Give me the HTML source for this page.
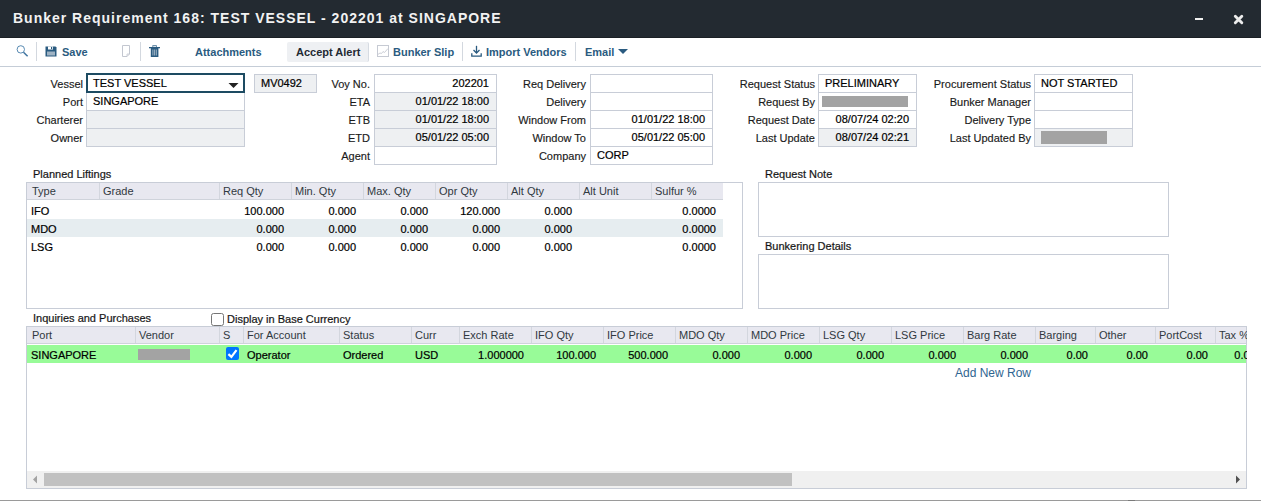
<!DOCTYPE html><html><head><meta charset="utf-8"><style>
*{box-sizing:border-box;margin:0;padding:0}
html,body{width:1261px;height:501px;overflow:hidden;background:#fff;font-family:"Liberation Sans",sans-serif;font-size:11px;color:#000}
div,span,svg{position:absolute}
.tt{left:13px;top:10px;font-size:14px;font-weight:bold;color:#f2f2f2;letter-spacing:1.0px;white-space:nowrap;line-height:16px}
.tbt{font-weight:bold;color:#2a5b80;white-space:nowrap;line-height:13px}
.sep{width:1px;background:#d3d8df}
.lbl{text-align:right;white-space:nowrap;color:#1a1a1a;line-height:13px;-webkit-text-stroke:0.15px #1a1a1a}
.bx{border:1px solid #c8cdd7;background:#fff}
.ro{background:#eef0f2}
.v{white-space:nowrap;color:#000;line-height:13px;-webkit-text-stroke:0.2px #000}
.hc{color:#303840;white-space:nowrap;line-height:13px}
.gb{background:#a3a3a3}
</style></head><body>
<div style="left:0;top:0;width:1261px;height:38px;background:#232a31"></div>
<div style="left:0;top:37px;width:1261px;height:1px;background:#1b2025"></div>
<div class="tt">Bunker Requirement 168: TEST VESSEL - 202201 at SINGAPORE</div>
<div style="left:1195px;top:18px;width:8px;height:2.4px;background:#f0f0f0"></div>
<svg style="left:1232px;top:14px" width="13" height="12" viewBox="0 0 13 12"><path d="M3.3 2.3L9.8 8.8M9.8 2.3L3.3 8.8" stroke="#ececec" stroke-width="2.9" stroke-linecap="round"/></svg>
<div style="left:0;top:66px;width:1261px;height:1px;background:#c5cdd7"></div>
<svg style="left:15px;top:44px" width="16" height="16" viewBox="0 0 16 16"><circle cx="5.8" cy="5.4" r="3.7" fill="none" stroke="#4f84ae" stroke-width="0.95"/><path d="M8.5 8.2L12.6 12.2" stroke="#3f74a0" stroke-width="1.5"/></svg>
<div class="sep" style="left:36px;top:42px;height:19px"></div>
<svg style="left:45px;top:45px" width="12" height="12" viewBox="0 0 12 12"><path d="M0.5 1.5h10l1 1v9h-11z" fill="#2a5b80"/><rect x="3" y="1.5" width="5" height="3" fill="#fff"/><rect x="6" y="2" width="1.2" height="2" fill="#2a5b80"/><rect x="2" y="6.5" width="8" height="4" fill="#9fb3c4"/></svg>
<div class="tbt" style="left:62px;top:46px">Save</div>
<svg style="left:121px;top:44px" width="10" height="14" viewBox="0 0 10 14"><path d="M1.5 1.5h7v8.5l-2.5 2.5h-4.5z" fill="none" stroke="#c3c7d0" stroke-width="1"/><path d="M6 12.5v-2.5h2.5" fill="none" stroke="#c3c7d0" stroke-width="0.8"/></svg>
<div class="sep" style="left:140px;top:42px;height:19px"></div>
<svg style="left:149px;top:44px" width="12" height="14" viewBox="0 0 12 14"><rect x="3.8" y="1.6" width="3.6" height="1.6" fill="none" stroke="#4d7898" stroke-width="0.8"/><rect x="0" y="3" width="11" height="1.3" fill="#2a5b80"/><rect x="1.8" y="4" width="7.6" height="9" fill="#2a5b80"/><rect x="3.4" y="5.5" width="1" height="6" fill="#9fb3c4"/><rect x="5.1" y="5.5" width="1" height="6" fill="#9fb3c4"/><rect x="6.8" y="5.5" width="1" height="6" fill="#9fb3c4"/></svg>
<div class="tbt" style="left:195px;top:46px">Attachments</div>
<div style="left:287px;top:42px;width:82px;height:20px;background:#eef0f3;border-right:1px solid #d6dbe2;border-radius:2px"></div>
<div class="tbt" style="left:296px;top:46px;color:#1f2a33">Accept Alert</div>
<svg style="left:377px;top:45px" width="12" height="12" viewBox="0 0 12 12"><rect x="0.5" y="0.5" width="11" height="11" fill="none" stroke="#c6cad3" stroke-width="1"/><path d="M0.8 9.5L3 8L4.5 8.5L6 6.5L7.5 7.5L11 3.5" fill="none" stroke="#c6cad3" stroke-width="0.9"/></svg>
<div class="tbt" style="left:393px;top:46px">Bunker Slip</div>
<div class="sep" style="left:462px;top:42px;height:19px"></div>
<svg style="left:471px;top:45px" width="12" height="12" viewBox="0 0 12 12"><path d="M5.5 0.8V8" stroke="#2a5b80" stroke-width="1.3"/><path d="M2.5 5L5.5 8L8.5 5" fill="none" stroke="#2a5b80" stroke-width="1.3"/><path d="M0.8 8.2V11.2H10.2V8.2" fill="none" stroke="#2a5b80" stroke-width="1.3"/></svg>
<div class="tbt" style="left:486px;top:46px">Import Vendors</div>
<div class="sep" style="left:575px;top:42px;height:19px"></div>
<div class="tbt" style="left:585px;top:46px">Email</div>
<svg style="left:618px;top:48px" width="10" height="7" viewBox="0 0 10 7"><path d="M0 1h10L5 6z" fill="#2a5b80"/></svg>
<div class="lbl" style="right:1178px;top:78px">Vessel</div>
<div class="lbl" style="right:1178px;top:96px">Port</div>
<div class="lbl" style="right:1178px;top:114px">Charterer</div>
<div class="lbl" style="right:1178px;top:132px">Owner</div>
<div class="bx" style="left:86px;top:92px;width:159px;height:19px"></div>
<div class="bx ro" style="left:86px;top:110px;width:159px;height:19px"></div>
<div class="bx ro" style="left:86px;top:128px;width:159px;height:19px"></div>
<div style="left:86px;top:73px;width:159px;height:20px;border:2px solid #1d4b62;background:#fff"></div>
<div class="v" style="left:93px;top:77px">TEST VESSEL</div>
<div class="v" style="left:93px;top:95px">SINGAPORE</div>
<svg style="left:228px;top:82px" width="12" height="7" viewBox="0 0 12 7"><path d="M0.5 1h10L5.5 6z" fill="#222"/></svg>
<div class="bx ro" style="left:254px;top:74px;width:63px;height:19px"></div>
<div class="v" style="left:261px;top:77px">MV0492</div>
<div class="lbl" style="right:891px;top:78px">Voy No.</div>
<div class="lbl" style="right:891px;top:96px">ETA</div>
<div class="lbl" style="right:891px;top:114px">ETB</div>
<div class="lbl" style="right:891px;top:132px">ETD</div>
<div class="lbl" style="right:891px;top:150px">Agent</div>
<div class="bx" style="left:374px;top:74px;width:123px;height:19px"></div>
<div class="bx ro" style="left:374px;top:92px;width:123px;height:19px"></div>
<div class="bx ro" style="left:374px;top:110px;width:123px;height:19px"></div>
<div class="bx ro" style="left:374px;top:128px;width:123px;height:19px"></div>
<div class="bx" style="left:374px;top:146px;width:123px;height:19px"></div>
<div class="v" style="right:772px;top:77px">202201</div>
<div class="v" style="right:772px;top:95px">01/01/22 18:00</div>
<div class="v" style="right:772px;top:113px">01/01/22 18:00</div>
<div class="v" style="right:772px;top:131px">05/01/22 05:00</div>
<div class="lbl" style="right:675px;top:78px">Req Delivery</div>
<div class="lbl" style="right:675px;top:96px">Delivery</div>
<div class="lbl" style="right:675px;top:114px">Window From</div>
<div class="lbl" style="right:675px;top:132px">Window To</div>
<div class="lbl" style="right:675px;top:150px">Company</div>
<div class="bx" style="left:590px;top:74px;width:123px;height:19px"></div>
<div class="bx" style="left:590px;top:92px;width:123px;height:19px"></div>
<div class="bx" style="left:590px;top:110px;width:123px;height:19px"></div>
<div class="bx" style="left:590px;top:128px;width:123px;height:19px"></div>
<div class="bx" style="left:590px;top:146px;width:123px;height:19px"></div>
<div class="v" style="right:556px;top:113px">01/01/22 18:00</div>
<div class="v" style="right:556px;top:131px">05/01/22 05:00</div>
<div class="v" style="left:597px;top:149px">CORP</div>
<div class="lbl" style="right:446px;top:78px">Request Status</div>
<div class="lbl" style="right:446px;top:96px">Request By</div>
<div class="lbl" style="right:446px;top:114px">Request Date</div>
<div class="lbl" style="right:446px;top:132px">Last Update</div>
<div class="bx" style="left:818px;top:74px;width:99px;height:19px"></div>
<div class="bx" style="left:818px;top:92px;width:99px;height:19px"></div>
<div class="bx" style="left:818px;top:110px;width:99px;height:19px"></div>
<div class="bx ro" style="left:818px;top:128px;width:99px;height:19px"></div>
<div class="v" style="left:825px;top:77px">PRELIMINARY</div>
<div class="v" style="right:352px;top:113px">08/07/24 02:20</div>
<div class="v" style="right:352px;top:131px">08/07/24 02:21</div>
<div class="gb" style="left:822px;top:96px;width:86px;height:11px"></div>
<div class="lbl" style="right:230px;top:78px">Procurement Status</div>
<div class="lbl" style="right:230px;top:96px">Bunker Manager</div>
<div class="lbl" style="right:230px;top:114px">Delivery Type</div>
<div class="lbl" style="right:230px;top:132px">Last Updated By</div>
<div class="bx" style="left:1034px;top:74px;width:99px;height:19px"></div>
<div class="bx" style="left:1034px;top:92px;width:99px;height:19px"></div>
<div class="bx" style="left:1034px;top:110px;width:99px;height:19px"></div>
<div class="bx ro" style="left:1034px;top:128px;width:99px;height:19px"></div>
<div class="v" style="left:1041px;top:77px">NOT STARTED</div>
<div class="gb" style="left:1041px;top:131px;width:66px;height:13px"></div>
<div class="v" style="left:33px;top:168px;color:#1e1e1e">Planned Liftings</div>
<div style="left:26px;top:182px;width:717px;height:127px;border:1px solid #c8cdd7;background:#fff"></div>
<div style="left:27px;top:183px;width:696px;height:17px;background:#e8e8f0;border-bottom:1px solid #cfd3db"></div>
<div style="left:99px;top:183px;width:1px;height:16px;background:#d3d6de"></div>
<div class="hc" style="left:32px;top:185px">Type</div>
<div style="left:219px;top:183px;width:1px;height:16px;background:#d3d6de"></div>
<div class="hc" style="left:103px;top:185px">Grade</div>
<div style="left:291px;top:183px;width:1px;height:16px;background:#d3d6de"></div>
<div class="hc" style="left:223px;top:185px">Req Qty</div>
<div style="left:363px;top:183px;width:1px;height:16px;background:#d3d6de"></div>
<div class="hc" style="left:295px;top:185px">Min. Qty</div>
<div style="left:435px;top:183px;width:1px;height:16px;background:#d3d6de"></div>
<div class="hc" style="left:367px;top:185px">Max. Qty</div>
<div style="left:507px;top:183px;width:1px;height:16px;background:#d3d6de"></div>
<div class="hc" style="left:439px;top:185px">Opr Qty</div>
<div style="left:579px;top:183px;width:1px;height:16px;background:#d3d6de"></div>
<div class="hc" style="left:511px;top:185px">Alt Qty</div>
<div style="left:651px;top:183px;width:1px;height:16px;background:#d3d6de"></div>
<div class="hc" style="left:583px;top:185px">Alt Unit</div>
<div class="hc" style="left:655px;top:185px">Sulfur %</div>
<div style="left:27px;top:219px;width:696px;height:18px;background:#e6edf0"></div>
<div class="v" style="left:31px;top:205px">IFO</div>
<div class="v" style="right:977px;top:205px">100.000</div>
<div class="v" style="right:905px;top:205px">0.000</div>
<div class="v" style="right:833px;top:205px">0.000</div>
<div class="v" style="right:761px;top:205px">120.000</div>
<div class="v" style="right:689px;top:205px">0.000</div>
<div class="v" style="right:545px;top:205px">0.0000</div>
<div class="v" style="left:31px;top:223px">MDO</div>
<div class="v" style="right:977px;top:223px">0.000</div>
<div class="v" style="right:905px;top:223px">0.000</div>
<div class="v" style="right:833px;top:223px">0.000</div>
<div class="v" style="right:761px;top:223px">0.000</div>
<div class="v" style="right:689px;top:223px">0.000</div>
<div class="v" style="right:545px;top:223px">0.0000</div>
<div class="v" style="left:31px;top:241px">LSG</div>
<div class="v" style="right:977px;top:241px">0.000</div>
<div class="v" style="right:905px;top:241px">0.000</div>
<div class="v" style="right:833px;top:241px">0.000</div>
<div class="v" style="right:761px;top:241px">0.000</div>
<div class="v" style="right:689px;top:241px">0.000</div>
<div class="v" style="right:545px;top:241px">0.0000</div>
<div class="v" style="left:765px;top:168px;color:#1e1e1e">Request Note</div>
<div style="left:758px;top:182px;width:411px;height:55px;border:1px solid #c8cdd7"></div>
<div class="v" style="left:765px;top:240px;color:#1e1e1e">Bunkering Details</div>
<div style="left:758px;top:254px;width:411px;height:55px;border:1px solid #c8cdd7"></div>
<div class="v" style="left:33px;top:312px;color:#1e1e1e">Inquiries and Purchases</div>
<svg style="left:210px;top:312px" width="15" height="15" viewBox="0 0 15 15"><rect x="1.5" y="1.5" width="12" height="12" rx="2" fill="#fff" stroke="#767676" stroke-width="1"/></svg>
<div class="v" style="left:227px;top:313px;color:#1e1e1e">Display in Base Currency</div>
<div style="left:26px;top:326px;width:1221px;height:163px;border:1px solid #c8cdd7;background:#fff;overflow:hidden"></div>
<div style="left:27px;top:327px;width:1219px;height:17px;background:#e8e8f0;border-bottom:1px solid #cfd3db"></div>
<div style="left:135px;top:327px;width:1px;height:16px;background:#d3d6de"></div>
<div class="hc" style="left:32px;top:329px">Port</div>
<div style="left:219px;top:327px;width:1px;height:16px;background:#d3d6de"></div>
<div class="hc" style="left:139px;top:329px">Vendor</div>
<div style="left:243px;top:327px;width:1px;height:16px;background:#d3d6de"></div>
<div class="hc" style="left:223px;top:329px">S</div>
<div style="left:339px;top:327px;width:1px;height:16px;background:#d3d6de"></div>
<div class="hc" style="left:247px;top:329px">For Account</div>
<div style="left:411px;top:327px;width:1px;height:16px;background:#d3d6de"></div>
<div class="hc" style="left:343px;top:329px">Status</div>
<div style="left:459px;top:327px;width:1px;height:16px;background:#d3d6de"></div>
<div class="hc" style="left:415px;top:329px">Curr</div>
<div style="left:531px;top:327px;width:1px;height:16px;background:#d3d6de"></div>
<div class="hc" style="left:463px;top:329px">Exch Rate</div>
<div style="left:603px;top:327px;width:1px;height:16px;background:#d3d6de"></div>
<div class="hc" style="left:535px;top:329px">IFO Qty</div>
<div style="left:675px;top:327px;width:1px;height:16px;background:#d3d6de"></div>
<div class="hc" style="left:607px;top:329px">IFO Price</div>
<div style="left:747px;top:327px;width:1px;height:16px;background:#d3d6de"></div>
<div class="hc" style="left:679px;top:329px">MDO Qty</div>
<div style="left:819px;top:327px;width:1px;height:16px;background:#d3d6de"></div>
<div class="hc" style="left:751px;top:329px">MDO Price</div>
<div style="left:891px;top:327px;width:1px;height:16px;background:#d3d6de"></div>
<div class="hc" style="left:823px;top:329px">LSG Qty</div>
<div style="left:963px;top:327px;width:1px;height:16px;background:#d3d6de"></div>
<div class="hc" style="left:895px;top:329px">LSG Price</div>
<div style="left:1035px;top:327px;width:1px;height:16px;background:#d3d6de"></div>
<div class="hc" style="left:967px;top:329px">Barg Rate</div>
<div style="left:1095px;top:327px;width:1px;height:16px;background:#d3d6de"></div>
<div class="hc" style="left:1039px;top:329px">Barging</div>
<div style="left:1155px;top:327px;width:1px;height:16px;background:#d3d6de"></div>
<div class="hc" style="left:1099px;top:329px">Other</div>
<div style="left:1215px;top:327px;width:1px;height:16px;background:#d3d6de"></div>
<div class="hc" style="left:1159px;top:329px">PortCost</div>
<div class="hc" style="left:1219px;top:329px">Tax %</div>
<div style="left:27px;top:345px;width:1219px;height:18px;background:#98fb98"></div>
<div class="v" style="left:31px;top:349px">SINGAPORE</div>
<div class="gb" style="left:138px;top:349px;width:52px;height:11px"></div>
<svg style="left:226px;top:347px" width="13" height="13" viewBox="0 0 13 13"><rect x="0" y="0" width="13" height="13" rx="2" fill="#0075ff"/><path d="M2.4 7.1L5.4 9.8L10.5 3.2" fill="none" stroke="#fff" stroke-width="2.2"/></svg>
<div class="v" style="left:247px;top:349px">Operator</div>
<div class="v" style="left:343px;top:349px">Ordered</div>
<div class="v" style="left:415px;top:349px">USD</div>
<div class="v" style="right:737px;top:349px">1.000000</div>
<div class="v" style="right:665px;top:349px">100.000</div>
<div class="v" style="right:593px;top:349px">500.000</div>
<div class="v" style="right:521px;top:349px">0.000</div>
<div class="v" style="right:449px;top:349px">0.000</div>
<div class="v" style="right:377px;top:349px">0.000</div>
<div class="v" style="right:305px;top:349px">0.000</div>
<div class="v" style="right:233px;top:349px">0.000</div>
<div class="v" style="right:173px;top:349px">0.00</div>
<div class="v" style="right:113px;top:349px">0.00</div>
<div class="v" style="right:53px;top:349px">0.00</div>
<div class="v" style="right:-7px;top:349px">0.0000</div>
<div style="left:1247px;top:320px;width:14px;height:175px;background:#fff"></div>
<div class="v" style="left:955px;top:366px;font-size:12px;line-height:14px;color:#2f6590;-webkit-text-stroke:0">Add New Row</div>
<div style="left:27px;top:471px;width:1219px;height:17px;background:#f0f0f0"></div>
<div style="left:44px;top:473px;width:748px;height:13px;background:#c1c1c1"></div>
<svg style="left:32px;top:475px" width="6" height="9" viewBox="0 0 6 9"><path d="M5 0.5V8.5L1 4.5z" fill="#a3a3a3"/></svg>
<svg style="left:1235px;top:475px" width="6" height="9" viewBox="0 0 6 9"><path d="M1 0.5V8.5L5 4.5z" fill="#505050"/></svg>
<div style="left:0;top:500px;width:1261px;height:1px;background:#9a9a9a"></div>
<div style="left:1128px;top:500px;width:7px;height:1px;background:#7a7a7a"></div>
</body></html>
